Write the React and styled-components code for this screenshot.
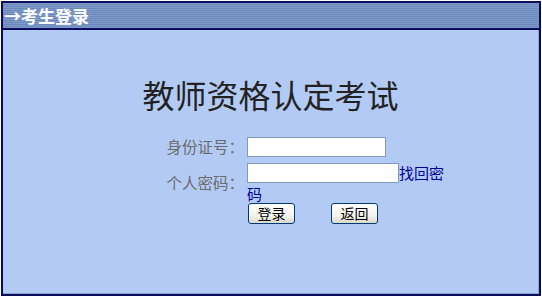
import styled, { createGlobalStyle } from "styled-components";

const GlobalStyle = createGlobalStyle`
    html, body {
        margin: 0;
        padding: 0;
        background: #ffffff;
    }
    body {
        font-family: "Noto Sans CJK SC", "DejaVu Sans", sans-serif;
    }
`;

const Frame = styled.div`
    margin: 1px 0 0 1px;
    width: 540px;
    height: 295px;
    box-sizing: border-box;
    border: 2px solid #0b0b5c;
    display: flex;
    flex-direction: column;
`;

const Header = styled.div`
    height: 25px;
    flex: none;
    border-bottom: 2px solid #0b0b5c;
    background: repeating-linear-gradient(
        to bottom,
        #7f9bcb 0px,
        #7f9bcb 1px,
        #6c88bb 1px,
        #6c88bb 2px
    );
    display: flex;
    align-items: center;
    padding-left: 1px;
    color: #ffffff;
    font-size: 17px;
    font-weight: bold;
    line-height: 1;
`;

const Body = styled.div`
    flex: 1;
    background: #b3cbf4;
    border-right: 1px solid #8aa6d8;
    border-bottom: 1px solid #8aa6d8;
    display: flex;
    flex-direction: column;
`;

const Title = styled.h1`
    margin: 46px 0 0;
    font-size: 32px;
    line-height: 36px;
    font-weight: normal;
    color: #222222;
    text-align: center;
`;

const Form = styled.div`
    margin-top: 24px;
    display: grid;
    grid-template-columns: 241px 200px;
    column-gap: 3px;
    row-gap: 5px;
    align-items: center;
`;

const Label = styled.div`
    text-align: right;
    font-size: 15.5px;
    line-height: 17px;
    color: #6b6b6b;
`;

const Field = styled.div`
    font-size: 15px;
    line-height: 17px;
`;

const Input = styled.input`
    display: inline-block;
    box-sizing: border-box;
    width: ${(p) => p.$w}px;
    height: 20px;
    margin: 0;
    padding: 1px 2px;
    border: 1px solid #7f9db9;
    background: #ffffff;
    vertical-align: middle;
    outline: none;
`;

const Link = styled.a`
    color: #000099;
    text-decoration: none;
    vertical-align: middle;
`;

const Buttons = styled.div`
    grid-column: 2;
    display: flex;
    gap: 36px;
    padding-left: 1px;
    margin-top: -4px;
`;

const Button = styled.button`
    width: 47px;
    height: 21px;
    box-sizing: border-box;
    margin: 0;
    padding: 0;
    border: 1px solid #003c74;
    border-radius: 3px;
    background: linear-gradient(to bottom, #ffffff 0%, #f4f3ee 60%, #dcd9cc 100%);
    font-family: "Noto Sans CJK SC", sans-serif;
    font-size: 14px;
    line-height: 19px;
    color: #000000;
`;

export default function App() {
    return (
        <>
            <GlobalStyle />
            <Frame>
                <Header>→考生登录</Header>
                <Body>
                    <Title>教师资格认定考试</Title>
                    <Form>
                        <Label>身份证号：</Label>
                        <Field>
                            <Input $w={139} type="text" />
                        </Field>
                        <Label>个人密码：</Label>
                        <Field>
                            <Input $w={152} type="password" />
                            <Link href="#">找回密码</Link>
                        </Field>
                        <Buttons>
                            <Button type="button">登录</Button>
                            <Button type="button">返回</Button>
                        </Buttons>
                    </Form>
                </Body>
            </Frame>
        </>
    );
}
